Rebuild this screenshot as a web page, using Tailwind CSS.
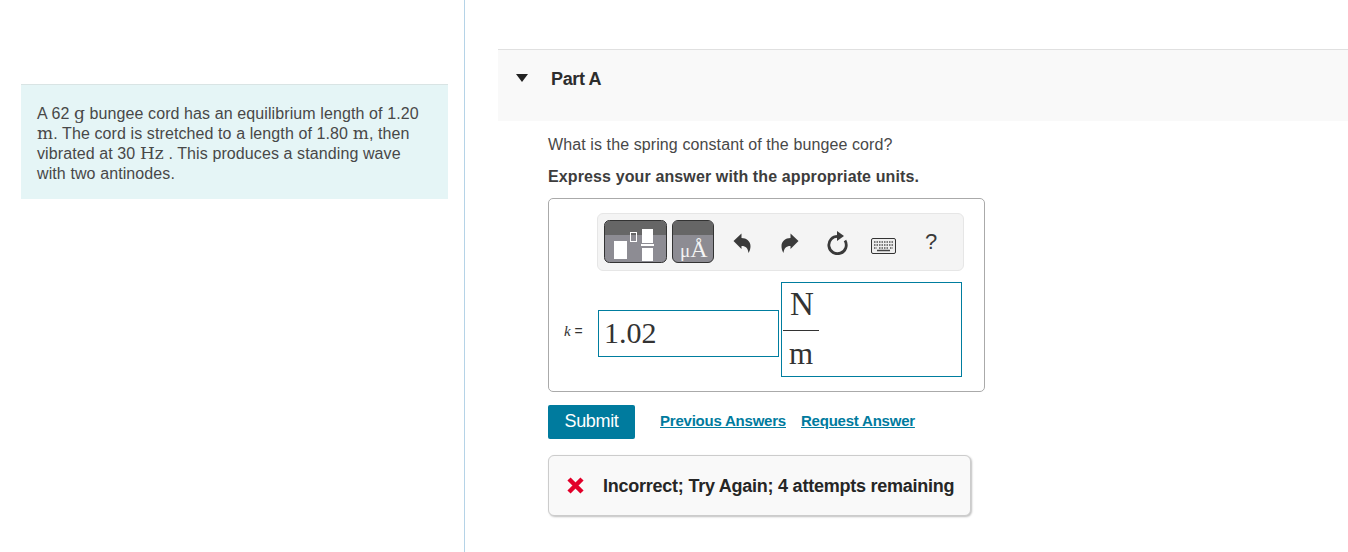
<!DOCTYPE html>
<html>
  <head>
    <meta charset="UTF-8" />
    <meta name="viewport" content="width=device-width, initial-scale=1.0" />
    <script src="https://cdn.jsdelivr.net/npm/@tailwindcss/browser@4"></script>
    <title>Part A</title>
  </head>
  <body class="bg-white text-[#3d3d3d] font-['Liberation_Sans',Arial,sans-serif] overflow-hidden">
    <div class="flex h-[552px] w-[1348px]">
      <!-- problem statement -->
      <div class="w-[465px] shrink-0 border-r border-[#b5d3e7] pt-[84px] pl-[21px] pr-4">
        <div class="h-[115px] bg-[#e5f5f6] border-t border-[#d9e4e4] pl-4 pr-2 pt-[19px] text-base leading-[20px] text-[#484848] tracking-[0.1px]">
          A 62 <span class="font-['DejaVu_Serif',serif] text-[17px] leading-none">g</span> bungee cord has an equilibrium length of 1.20<br />
          <span class="font-['DejaVu_Serif',serif] text-[17px] leading-none">m</span>. The cord is stretched to a length of 1.80 <span class="font-['DejaVu_Serif',serif] text-[17px] leading-none">m</span>, then<br />
          vibrated at 30 <span class="font-['DejaVu_Serif',serif] text-[17px] leading-none">Hz</span> . This produces a standing wave<br />
          with two antinodes.
        </div>
      </div>

      <div class="flex-1 pt-[49px] pl-[33px]">
        <!-- part header -->
        <div class="flex items-start h-[72px] bg-[#f9f9f9] border-t border-[#e0e0e0]">
          <svg class="ml-[18px] mt-[24px]" width="12" height="8" viewBox="0 0 12 8"><path d="M0 0h12L6 8z" fill="#222" /></svg>
          <span class="ml-[23px] mt-[19px] text-[18px] leading-[20px] font-bold text-[#2d2d2d] tracking-[-0.35px]">Part A</span>
        </div>

        <div class="pl-[50px]">
          <p class="mt-[14px] text-base leading-[20px] text-[#484848] tracking-[0.1px]">What is the spring constant of the bungee cord?</p>
          <p class="mt-[12px] text-base leading-[20px] font-bold tracking-[0.12px]">Express your answer with the appropriate units.</p>

          <!-- answer box -->
          <div class="mt-[11px] w-[437px] h-[194px] border border-[#aaa] rounded-[5px] pt-[14px] pl-[48px]">
            <div class="flex items-center w-[367px] h-[58px] bg-[#f4f4f4] border border-[#e6e6e6] rounded-[6px] pl-[6px]">
              <svg class="-mt-[2px]" width="63" height="43" viewBox="0 0 63 43">
                <rect x="0.5" y="0.5" width="62" height="42" rx="5" fill="#8d8c93" stroke="#333" />
                <path d="M1 15V5.5A4.5 4.5 0 0 1 5.5 1h52A4.5 4.5 0 0 1 62 5.5V15z" fill="#666" />
                <rect x="10" y="21" width="13" height="18" fill="#fff" />
                <rect x="26.500" y="12.500" width="6" height="9" fill="none" stroke="#fff" />
                <rect x="38" y="9" width="11" height="14" fill="#fff" />
                <rect x="37" y="24" width="13" height="2" fill="#fff" />
                <rect x="38" y="28" width="11" height="13" fill="#fff" />
              </svg>
              <div class="relative -mt-[2px] ml-[5px] w-[42px] h-[43px] rounded-[6px] border border-[#333] overflow-hidden bg-[#8d8c93]">
                <div class="h-[14px] bg-[#666]"></div>
                <span class="absolute left-[7px] top-[13px] text-[24px] leading-[30px] text-[#f4f4f4] font-['Liberation_Serif',serif] whitespace-nowrap"><span class="text-[19px] leading-none">μ</span>Å</span>
              </div>
              <svg class="ml-[19px] mt-[1px]" width="18" height="20" viewBox="0 0 18 20"><path d="M0.500 8 8.500 0.500v4.500c5 0 9 3.500 9 8 0 2.500-.5 4.500-2 7-.5-4.500-2.500-7-7-7v3z" fill="#3a3a3a" /></svg>
              <svg class="ml-[30px] mt-[1px]" width="18" height="20" viewBox="0 0 18 20"><path d="M17.500 8 9.500 0.500v4.500c-5 0-9 3.500-9 8 0 2.500.5 4.500 2 7 .5-4.500 2.500-7 7-7v3z" fill="#3a3a3a" /></svg>
              <svg class="ml-[28px] mt-[1px]" width="22" height="24" viewBox="0 0 22 24"><path d="M11 5.300A8.700 8.700 0 1 0 18 9.500" fill="none" stroke="#3a3a3a" stroke-width="2.800" /><path d="M10 0v10l7-5z" fill="#3a3a3a" /></svg>
              <svg class="ml-[22px] mt-[7px]" width="25" height="16" viewBox="0 0 25 16">
                <rect x="0.500" y="0.500" width="24" height="15" rx="1.500" fill="#eee" stroke="#333" />
                <path d="M3 4h19M3 7h19M3 10h3m2 0h9m2 0h3" stroke="#555" stroke-width="1.500" stroke-dasharray="1.500 1" fill="none" />
                <path d="M6 12.500h13" stroke="#444" stroke-width="1.500" />
              </svg>
              <span class="ml-[29px] text-[22px] leading-[24px] text-[#3a3a3a]">?</span>
            </div>

            <!-- answer row -->
            <div class="flex items-center mt-[11px] -ml-[34px] font-['Liberation_Serif',serif] text-[#333]">
              <span class="text-[15px] w-[35px] pl-px mt-[3px] whitespace-nowrap"><i>k</i> <span class="font-['Liberation_Sans',sans-serif] text-[14px]">=</span></span>
              <div class="flex items-center mt-[7px] w-[181px] h-[47px] border border-[#007d9f] pl-[5px] text-[30px] leading-none">1.02</div>
              <div class="ml-[2px] w-[181px] h-[95px] border border-[#007d9f] pl-[2px] pt-px">
                <div class="w-[36px] text-center text-[33px] leading-[40px]">N</div>
                <div class="-ml-px w-[36px] h-px mt-[6px] bg-[#333]"></div>
                <div class="w-[36px] -ml-px text-center text-[31px] leading-[40px] mt-[3px]">m</div>
              </div>
            </div>
          </div>

          <!-- actions -->
          <div class="flex items-center mt-[13px] h-[34px]">
            <button class="w-[87px] h-[34px] pb-[2px] bg-[#007b9e] text-white text-[18px] rounded-[2px] tracking-[-0.35px]">Submit</button>
            <a class="ml-[25px] -mt-[2px] text-[#007b9e] font-bold text-[15px] underline tracking-[-0.22px]">Previous Answers</a>
            <a class="ml-[15px] -mt-[2px] text-[#007b9e] font-bold text-[15px] underline tracking-[-0.22px]">Request Answer</a>
          </div>

          <!-- feedback -->
          <div class="flex items-center mt-[16px] w-[423px] h-[61px] bg-[#f9f9f9] border border-[#ccc] rounded-[6px] shadow-[1px_1px_2px_rgba(0,0,0,0.25)] pl-[17px]">
            <svg width="19" height="17" viewBox="0 0 19 17"><path d="M3 2 16 15M16 2 3 15" stroke="#e2002a" stroke-width="4.500" /></svg>
            <span class="ml-[18px] mt-[1px] text-[18px] font-bold text-[#262626] tracking-[-0.24px] whitespace-nowrap">Incorrect; Try Again; 4 attempts remaining</span>
          </div>
        </div>
      </div>
    </div>
  </body>
</html>
